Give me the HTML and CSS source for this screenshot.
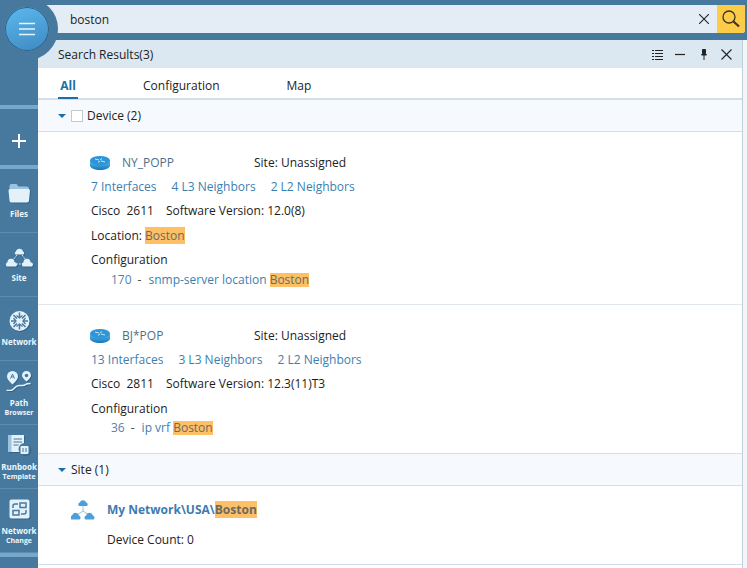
FILE: index.html
```html
<!DOCTYPE html>
<html lang="en">
<head>
<meta charset="utf-8">
<title>Search Results</title>
<link rel="stylesheet" href="styles.css">
</head>
<body>
<div class="app">
  <aside class="sidebar">
    <div class="band"></div>
    <div class="add"><svg width="16" height="16" viewBox="0 0 16 16"><path d="M8 1v14M1 8h14" stroke="#fff" stroke-width="2"/></svg></div>
    <div class="band"></div>
    <div class="nav">
      <svg class="nav-icon" width="23" height="20" viewBox="0 0 23 20"><path d="M1.500 3q0-2 2-2h5l2 2.500h8q2.500 0 2.500 2v1.500H1.500z" fill="#9cc3df"/><path d="M.5 7.500q0-1.500 1.500-1.500h18.500q1.500 0 1.500 1.500l-1 10q0 2-2 2H3.500q-2 0-2-2z" fill="#e3f1fa"/></svg>
      <span class="nav-main">Files</span>
    </div>
    <div class="nav">
      <svg class="nav-icon" width="29" height="20" viewBox="0 0 29 20"><path d="M12 8L8 13M17 8l4 5M11 17h7" stroke="#cfe5f4" stroke-width="1" stroke-dasharray="2 1"/><g fill="#e3f1fa"><path d="M10.500 7.500a1.800 1.800 0 0 1 .5-3a3.600 3.600 0 0 1 7 0a1.800 1.800 0 0 1 .5 3z"/><path d="M2 19.500a2.300 2.300 0 0 1 .5-4.200a3.500 3.500 0 0 1 7 0a2.300 2.300 0 0 1 1.500 4.200z"/><path d="M18 19.500a2.300 2.300 0 0 1 .5-4.200a3.500 3.500 0 0 1 7 0a2.300 2.300 0 0 1 1.500 4.200z"/></g></svg>
      <span class="nav-main">Site</span>
    </div>
    <div class="nav">
      <svg class="nav-icon" width="21" height="20" viewBox="0 0 21 20"><circle cx="10.500" cy="10" r="10" fill="#e3f1fa"/><path d="M10.500 1.500v5M10.500 13.500v5M2 10h5M14 10h5M4.500 4l3.500 3.500M13 12.500L16.500 16M16.500 4L13 7.500M8 12.500L4.500 16" stroke="#47799f" stroke-width="1.500"/><path d="M7.500 4.500l3 2.500 3-2.500M7.500 15.500l3-2.500 3 2.500M4.500 7l2.500 3-2.500 3M16.500 7L14 10l2.500 3" fill="none" stroke="#47799f" stroke-width="1.300"/></svg>
      <span class="nav-main">Network</span>
    </div>
    <div class="nav nav-two">
      <svg class="nav-icon" width="26" height="20" viewBox="0 0 26 20"><path d="M6.500 0a5.500 5.500 0 0 1 5.500 5.500Q12 8.500 6.500 13.500Q1 8.500 1 5.500A5.500 5.500 0 0 1 6.500 0z" fill="#e3f1fa"/><path d="M20.500 0a4.500 4.500 0 0 1 4.500 4.500Q25 6.500 20.500 10.500Q16 6.500 16 4.500a4.500 4.500 0 0 1 4.500-4.500z" fill="#e3f1fa"/><circle cx="20.500" cy="4.500" r="1.800" fill="#47799f"/><path d="M4.500 7.500l2-4.500 2 4.500M5.300 6h2.400" stroke="#47799f" fill="none"/><path d="M.5 19.500h4q2 0 4-2.500t5-2.500h3q2 0 3-1t5-1" stroke="#e3f1fa" stroke-width="1.500" fill="none"/></svg>
      <span class="nav-main">Path</span><span class="nav-sub">Browser</span>
    </div>
    <div class="nav nav-two">
      <svg class="nav-icon" width="24" height="20" viewBox="0 0 24 20"><path d="M1 0h16v17H1z" fill="#e3f1fa"/><path d="M1 0h3.500v17H1z" fill="#9cc3df"/><path d="M6.500 4h8.500M6.500 7h8.500M6.500 10h5" stroke="#47799f" stroke-width="1.200"/><circle cx="17.500" cy="14" r="6" fill="#47799f"/><rect x="13.500" y="11" width="8" height="8" rx="1" fill="#e3f1fa"/><path d="M15.500 11V9.500h4V11M16 13v4M19 13v4" stroke="#47799f" fill="none"/></svg>
      <span class="nav-main">Runbook</span><span class="nav-sub">Template</span>
    </div>
    <div class="nav nav-two">
      <svg class="nav-icon" width="21" height="20" viewBox="0 0 21 20"><rect x=".5" y=".5" width="20" height="19" rx="2" fill="#e3f1fa"/><g fill="none" stroke="#47799f" stroke-width="1.500"><rect x="11" y="4" width="6" height="4.500"/><rect x="4" y="11.500" width="6" height="4.500"/><path d="M9 5H6Q4 5 4 7v2M12 15h3q2 0 2-2v-2"/></g></svg>
      <span class="nav-main">Network</span><span class="nav-sub">Change</span>
    </div>
    <div class="band"></div>
  </aside>

  <main class="main">
    <div class="searchbar">
      <div class="search-text">boston</div>
      <svg class="search-clear" width="10" height="10" viewBox="0 0 10 10"><path d="M0 0l10 10M10 0L0 10" stroke="#222" stroke-width="1.100"/></svg>
      <div class="search-btn"><svg width="18" height="18" viewBox="0 0 18 18"><circle cx="7" cy="7" r="6" fill="none" stroke="#3d3420" stroke-width="1.300"/><path d="M11.500 11.500L17 16.500" stroke="#3d3420" stroke-width="2.200"/></svg></div>
    </div>

    <div class="panel-wrap">
      <section class="panel">
        <header class="panel-head">
          <span class="panel-title">Search Results(3)</span>
          <div class="panel-tools">
            <svg class="tool-list" width="11" height="11" viewBox="0 0 11 11"><path d="M3 1.500h8M3 4.500h8M3 7.500h8M3 10.500h8M0 1.500h2M0 4.500h2M0 7.500h2M0 10.500h2" stroke="#222"/></svg>
            <svg class="tool-min" width="10" height="11" viewBox="0 0 10 11"><path d="M0 5.500h10" stroke="#222" stroke-width="1.200"/></svg>
            <svg class="tool-pin" width="6" height="11" viewBox="0 0 6 11"><path d="M1.500.5h3v4l1 1.500H.5l1-1.500zM3 6v5" fill="#222" stroke="#222"/></svg>
            <svg class="tool-close" width="11" height="11" viewBox="0 0 11 11"><path d="M.5.5l10 10M10.500.5l-10 10" stroke="#222" stroke-width="1.100"/></svg>
          </div>
        </header>

        <nav class="tabs">
          <span class="tab tab-active">All</span>
          <span class="tab tab-config">Configuration</span>
          <span class="tab tab-map">Map</span>
        </nav>

        <div class="group-head">
          <span class="caret"></span><span class="check"></span><span>Device (2)</span>
        </div>

        <article class="device">
          <div class="row device-title">
            <svg class="router" width="20" height="14" viewBox="0 0 20 14"><defs><linearGradient id="rg" x1="0" y1="0" x2="0" y2="1"><stop offset="0" stop-color="#5cc0f0"/><stop offset="1" stop-color="#1677bb"/></linearGradient></defs><path d="M0 4.500v5C0 12 4.500 14 10 14s10-2 10-4.500v-5z" fill="url(#rg)"/><ellipse cx="10" cy="4.500" rx="10" ry="4.500" fill="#2e96d8"/><path d="M5 3l4 1M15 6l-4-1M8 6.500l2-1.500M12 2.500L10 4" stroke="#d6effc" stroke-width=".9"/></svg>
            <span class="device-name">NY_POPP</span>
            <span class="device-site">Site: Unassigned</span>
          </div>
          <div class="row links"><span>7 Interfaces</span><span>4 L3 Neighbors</span><span>2 L2 Neighbors</span></div>
          <div class="row specs"><span>Cisco&nbsp; 2611</span><span>Software Version: 12.0(8)</span></div>
          <div class="row"><span>Location: <mark class="hit">Boston</mark></span></div>
          <div class="row">Configuration</div>
          <div class="config-line"><span class="line-no">170</span><span class="dash">-</span><span class="config-text">snmp-server location <mark class="hit hit-tight">Boston</mark></span></div>
        </article>

        <article class="device device-second">
          <div class="row device-title">
            <svg class="router" width="20" height="14" viewBox="0 0 20 14"><path d="M0 4.500v5C0 12 4.500 14 10 14s10-2 10-4.500v-5z" fill="url(#rg)"/><ellipse cx="10" cy="4.500" rx="10" ry="4.500" fill="#2e96d8"/><path d="M5 3l4 1M15 6l-4-1M8 6.500l2-1.500M12 2.500L10 4" stroke="#d6effc" stroke-width=".9"/></svg>
            <span class="device-name">BJ*POP</span>
            <span class="device-site">Site: Unassigned</span>
          </div>
          <div class="row links"><span>13 Interfaces</span><span>3 L3 Neighbors</span><span>2 L2 Neighbors</span></div>
          <div class="row specs"><span>Cisco&nbsp; 2811</span><span>Software Version: 12.3(11)T3</span></div>
          <div class="row">Configuration</div>
          <div class="config-line"><span class="line-no">36</span><span class="dash">-</span><span class="config-text">ip vrf <mark class="hit hit-tight">Boston</mark></span></div>
        </article>

        <div class="group-head group-site">
          <span class="caret"></span><span>Site (1)</span>
        </div>

        <article class="site">
          <div class="site-title">
            <svg class="site-icon" width="24" height="21" viewBox="0 0 24 21"><path d="M12 7v5M12 12l-6 4M12 12l6 4" stroke="#9cc3df"/><g fill="#4a9fdd"><path d="M8 7a2 2 0 0 1 .8-3.500a3.400 3.400 0 0 1 6.400 0a2 2 0 0 1 .8 3.500z"/><path d="M.5 20.500a2.200 2.200 0 0 1 .6-4a3.500 3.500 0 0 1 6.800 0a2.200 2.200 0 0 1 .6 4z"/><path d="M14.500 20.500a2.200 2.200 0 0 1 .6-4a3.500 3.500 0 0 1 6.800 0a2.200 2.200 0 0 1 .6 4z"/></g></svg>
            <b class="site-path">My Network\USA\<mark class="hit">Boston</mark></b>
          </div>
          <div class="site-count">Device Count: 0</div>
        </article>
      </section>
    </div>
  </main>

  <button class="menu-btn" type="button" aria-label="Menu"><svg width="16" height="14" viewBox="0 0 16 14"><path d="M0 1.500h16M0 7h16M0 12.500h16" stroke="#e8f4fb" stroke-width="1.500"/></svg></button>
</div>
</body>
</html>
```
FILE: styles.css
```css
* { box-sizing: border-box; }
html, body { margin: 0; height: 100%; }
body {
  width: 747px;
  height: 568px;
  overflow: hidden;
  font-family: "Open Sans", "Noto Sans", sans-serif;
  font-size: 12px;
  color: #1c1c1c;
  background: #fff;
}
.app { position: relative; display: flex; width: 747px; height: 568px; overflow: hidden; }

.sidebar {
  flex: 0 0 38px;
  display: flex;
  flex-direction: column;
  padding-top: 105px;
  background: #47799f;
  color: #eef6fb;
}
.band { flex: none; height: 4px; background: #76a7cd; }
.add { flex: none; height: 56px; display: flex; align-items: center; justify-content: center; padding-top: 8px; }
.nav {
  flex: none;
  height: 64px;
  display: flex;
  flex-direction: column;
  align-items: center;
  padding-top: 14px;
  border-bottom: 1px solid #5d8cb0;
  font-weight: 700;
}
.nav:last-of-type { border-bottom: 0; }
.nav-two { padding-top: 10px; }
.nav-icon { flex: none; margin-bottom: 5px; filter: drop-shadow(1px 1px 0 #33658c); }
.nav-two .nav-icon { margin-bottom: 6px; }
.nav-main { font-size: 8px; line-height: 11px; white-space: nowrap; }
.nav-sub { font-size: 7px; line-height: 9px; white-space: nowrap; }

.main {
  flex: 1;
  min-width: 0;
  display: flex;
  flex-direction: column;
  background: #47799f;
}
.searchbar {
  flex: none;
  display: flex;
  align-items: center;
  height: 28px;
  margin: 5px 2px 7px 0;
  background: #e4edf5;
  border-radius: 0 0 3px 0;
}
.search-text { flex: 1; padding-left: 32px; font-size: 12px; color: #222; }
.search-clear { flex: none; margin-right: 8px; }
.search-btn {
  flex: none;
  width: 28px;
  height: 28px;
  display: flex;
  align-items: center;
  justify-content: center;
  background: #fccb47;
  border-radius: 0 0 3px 0;
}

.panel-wrap { flex: 1; min-height: 0; padding-right: 4px; background: #f1f6fb; }
.panel { height: 100%; background: #fff; border-right: 1px solid #c5cfd6; }
.panel-head {
  display: flex;
  align-items: center;
  justify-content: space-between;
  height: 28px;
  padding: 0 10px 0 20px;
  background: #dbe8f1;
}
.panel-title { font-size: 12px; color: #222; }
.panel-tools { display: flex; align-items: center; }
.panel-tools svg { display: block; }
.tool-min { margin-left: 12px; }
.tool-pin { margin-left: 16px; }
.tool-close { margin-left: 14px; }

.tabs {
  display: flex;
  height: 32px;
  padding-left: 20px;
  border-bottom: 2px solid #d2dfe7;
}
.tab { height: 31px; line-height: 35px; font-size: 12px; color: #222; }
.tab-active { width: 20px; text-align: center; font-weight: 700; color: #1c6ea4; border-bottom: 2px solid #1c6ea4; }
.tab-config { margin-left: 65px; }
.tab-map { margin-left: 67px; }

.group-head {
  display: flex;
  align-items: center;
  height: 32px;
  padding-left: 20px;
  background: #f6fafe;
  border-bottom: 1px solid #d2dfe7;
  color: #222;
}
.group-site { border-top: 1px solid #d2dfe7; height: 33px; }
.caret {
  width: 0;
  height: 0;
  margin-right: 5px;
  border-left: 4px solid transparent;
  border-right: 4px solid transparent;
  border-top: 4px solid #1c6ea4;
}
.check {
  width: 12px;
  height: 12px;
  margin-right: 4px;
  background: #fff;
  border: 1px solid #c4c8cb;
}

.device { padding: 19px 0 0 52px; height: 173px; border-bottom: 1px solid #dfe7ec; }
.device-second { height: 148px; border-bottom: 0; }
.row { display: flex; align-items: center; height: 24.500px; margin-left: 1px; white-space: pre; }
.device-title { height: 23px; margin-left: 0; }
.router { margin-right: 12px; flex: none; }
.device-name { width: 132px; color: #4d6f8c; }
.device-site { color: #222; }
.links { gap: 15px; color: #3b7fb0; }
.specs { gap: 12px; }
.hit { background: #fdc066; color: #6d6a5f; }
.hit-tight { display: inline-block; line-height: 14px; }
.config-line { display: flex; height: 14px; align-items: center; padding-left: 21px; color: #3b7fb0; white-space: pre; }
.line-no { color: #5a7fa8; }
.dash { margin: 0 7px 0 6px; color: #444; }
.site { padding: 11px 0 0 33px; height: 79px; border-bottom: 1px solid #d2dfe7; }
.site-title { display: flex; align-items: center; height: 24px; }
.site-icon { flex: none; margin-right: 12px; }
.site-path { color: #3d7cb1; font-weight: 700; }
.site-count { margin: 10px 0 0 36px; color: #222; }

.menu-btn {
  position: absolute;
  left: -4px;
  top: -2px;
  width: 62px;
  height: 62px;
  padding: 0;
  border: 9px solid #47799f;
  border-radius: 50%;
  background: linear-gradient(160deg, #5cbaf0, #3e88bf);
  box-shadow: inset 0 0 0 1px #2c628c;
  display: flex;
  align-items: center;
  justify-content: center;
}
```
